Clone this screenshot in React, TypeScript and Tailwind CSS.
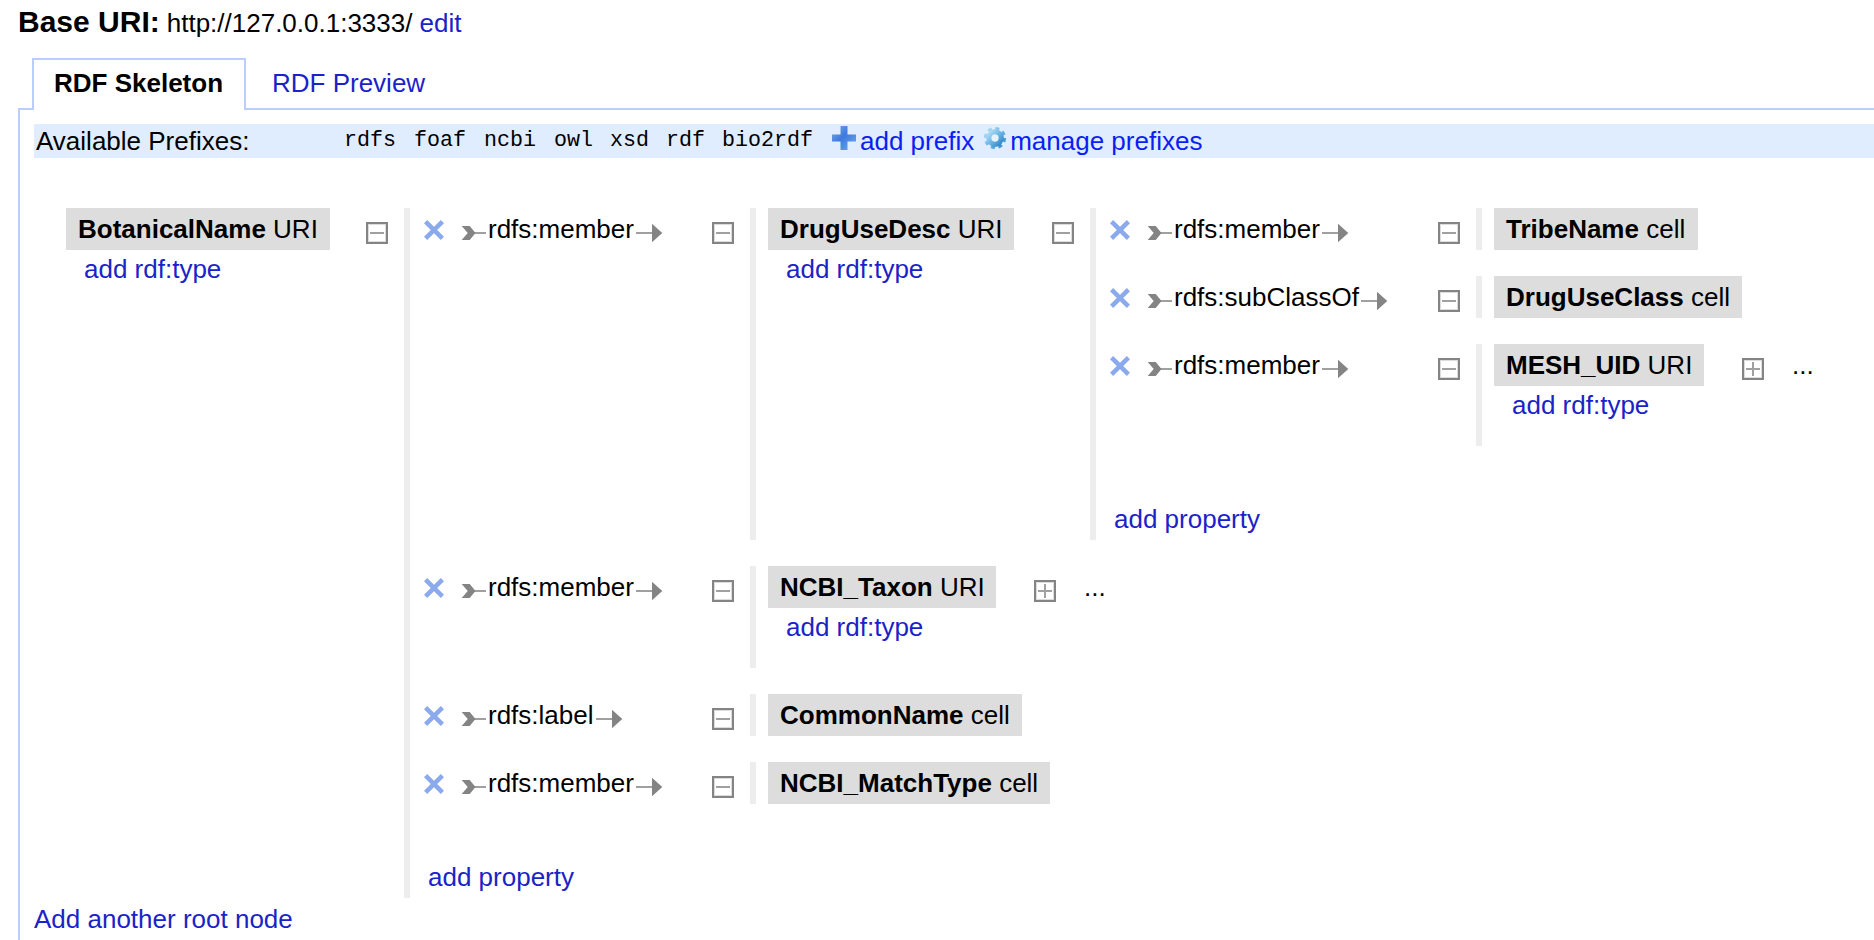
import React from "react";

type Property = { name: string; target: NodeData };
type NodeData = {
  name: string;
  kind: "URI" | "cell";
  boxWidth: string;
  expandGap?: string;
  collapsed?: boolean;
  propertyWidth?: string;
  properties?: Property[];
};

const tree: NodeData = {
  name: "BotanicalName",
  kind: "URI",
  boxWidth: "w-[264px]",
  expandGap: "ml-[36px]",
  propertyWidth: "w-[302px]",
  properties: [
    {
      name: "rdfs:member",
      target: {
        name: "DrugUseDesc",
        kind: "URI",
        boxWidth: "w-[246px]",
        propertyWidth: "w-[342px]",
        properties: [
          { name: "rdfs:member", target: { name: "TribeName", kind: "cell", boxWidth: "w-[204px]" } },
          { name: "rdfs:subClassOf", target: { name: "DrugUseClass", kind: "cell", boxWidth: "w-[248px]" } },
          { name: "rdfs:member", target: { name: "MESH_UID", kind: "URI", boxWidth: "w-[210px]", collapsed: true } },
        ],
      },
    },
    { name: "rdfs:member", target: { name: "NCBI_Taxon", kind: "URI", boxWidth: "w-[228px]", collapsed: true } },
    { name: "rdfs:label", target: { name: "CommonName", kind: "cell", boxWidth: "w-[254px]" } },
    { name: "rdfs:member", target: { name: "NCBI_MatchType", kind: "cell", boxWidth: "w-[282px]" } },
  ],
};

const prefixes = [
  { name: "rdfs", width: "w-[70px]" },
  { name: "foaf", width: "w-[70px]" },
  { name: "ncbi", width: "w-[70px]" },
  { name: "owl", width: "w-[56px]" },
  { name: "xsd", width: "w-[56px]" },
  { name: "rdf", width: "w-[56px]" },
  { name: "bio2rdf", width: "w-[110px]" },
];

function Toggle({ plus = false }: { plus?: boolean }) {
  return (
    <svg className="mt-[14px] block size-[22px] shrink-0" viewBox="0 0 22 22" fill="none">
      <rect x="1" y="1" width="20" height="20" fill="#fff" stroke="#848484" strokeWidth="2" />
      <rect x="2.5" y="2.5" width="17" height="17" stroke="#dcdcdc" />
      <path d="M4 11h14" stroke="#a0a0a0" strokeWidth="2" />
      {plus && <path d="M11 4v14" stroke="#a0a0a0" strokeWidth="2" />}
    </svg>
  );
}

function RemoveIcon() {
  return (
    <svg className="mt-[12px] ml-[14px] block size-[20px] shrink-0" viewBox="0 0 20 20" fill="none">
      <path d="M1.6 1.6 18.4 18.4M18.4 1.6 1.6 18.4" stroke="#8aaaec" strokeWidth="4.5" />
    </svg>
  );
}

function ArrowTail() {
  return (
    <svg className="mt-[16px] ml-[17px] block h-[18px] w-[26px] shrink-0" viewBox="0 0 26 18">
      <path d="M13 9h12" stroke="#a0a0a0" strokeWidth="2" />
      <path d="M.7 2h8l5.800 7-5.800 7H.7l6-7z" fill="#848484" />
    </svg>
  );
}

function ArrowHead() {
  return (
    <svg className="mt-[15px] ml-[2px] block h-[20px] w-[27px] shrink-0" viewBox="0 0 27 20">
      <path d="M0 10h17" stroke="#a0a0a0" strokeWidth="2" />
      <path d="M16 .7 26.300 10 16 19.300z" fill="#848484" />
    </svg>
  );
}

function PlusIcon() {
  return (
    <svg className="mt-[2px] block size-[24px] shrink-0" viewBox="0 0 24 24">
      <defs>
        <linearGradient id="plus-fill" x1="0" y1="0" x2="1" y2="1">
          <stop offset="0" stopColor="#7fabea" />
          <stop offset=".45" stopColor="#3d7add" />
          <stop offset="1" stopColor="#75a8ee" />
        </linearGradient>
      </defs>
      <path d="M8.500 0h7v8.500H24v7h-8.500V24h-7v-8.500H0v-7h8.500z" fill="url(#plus-fill)" />
    </svg>
  );
}

function GearIcon() {
  return (
    <svg className="mt-[2px] ml-[9px] block size-[24px] shrink-0" viewBox="0 0 24 24">
      <defs>
        <linearGradient id="gear-fill" x1="0" y1="0" x2="1" y2="1">
          <stop offset="0" stopColor="#b4dcf5" />
          <stop offset=".5" stopColor="#6cb8e8" />
          <stop offset="1" stopColor="#3488c8" />
        </linearGradient>
      </defs>
      <circle cx="12" cy="12" r="9.400" fill="none" stroke="url(#gear-fill)" strokeWidth="3.400" strokeDasharray="3.900 3.483" />
      <circle cx="12" cy="12" r="6.200" fill="none" stroke="url(#gear-fill)" strokeWidth="5.400" />
      <circle cx="12" cy="12" r="3.400" fill="#e6f3fd" />
    </svg>
  );
}

function PropertyRow({ property, width }: { property: Property; width: string }) {
  return (
    <div className="flex items-start">
      <div className={`flex shrink-0 items-start ${width}`}>
        <RemoveIcon />
        <ArrowTail />
        <span className="mt-[6px] ml-px">{property.name}</span>
        <ArrowHead />
      </div>
      <Toggle />
      <div className="ml-[16px] self-stretch border-l-[6px] border-[#ededed] pl-[12px]">
        <TreeNode node={property.target} />
      </div>
    </div>
  );
}

function TreeNode({ node }: { node: NodeData }) {
  return (
    <div className="flex items-start">
      <div className={`shrink-0 ${node.boxWidth} ${node.kind === "URI" ? "min-h-[102px]" : ""}`}>
        <div className="h-[42px] bg-[#dddddd] px-[12px] py-[6px]">
          <b>{node.name}</b> {node.kind}
        </div>
        {node.kind === "URI" && <a className="mt-[4px] ml-[18px] block text-[#1a23c8]">add rdf:type</a>}
      </div>
      {(node.properties || node.collapsed) && (
        <div className={`flex items-start self-stretch ${node.expandGap ?? "ml-[38px]"}`}>
          <Toggle plus={node.collapsed} />
          {node.collapsed && <span className="mt-[6px] ml-[28px]">...</span>}
          {node.properties && (
            <div className="ml-[16px] flex flex-col gap-[26px] border-l-[6px] border-[#ededed] pb-[6px]">
              {node.properties.map((p, i) => (
                <PropertyRow key={i} property={p} width={node.propertyWidth ?? ""} />
              ))}
              <a className="mt-[32px] ml-[18px] text-[#1a23c8]">add property</a>
            </div>
          )}
        </div>
      )}
    </div>
  );
}

export default function App() {
  return (
    <div className="flex h-[940px] w-[1874px] flex-col overflow-hidden bg-white font-['Liberation_Sans',Arial,sans-serif] text-[26px] leading-[30px] whitespace-nowrap text-black">
      <header className="flex h-[58px] shrink-0 items-baseline gap-[7px] pt-[5px] pl-[18px]">
        <b className="text-[30px] leading-[34px]">Base URI:</b>
        <span>http://127.0.0.1:3333/</span>
        <a className="text-[#1a23c8]">edit</a>
      </header>

      <nav className="z-10 flex h-[52px] shrink-0 pl-[32px]">
        <div className="w-[214px] border-2 border-b-0 border-[#bbccff] bg-white pt-[8px] pl-[20px] font-bold">RDF Skeleton</div>
        <a className="pt-[10px] pl-[26px] text-[#1a23c8]">RDF Preview</a>
      </nav>

      <main className="-mt-[2px] ml-[18px] flex-1 border-t-2 border-l-2 border-[#bbccff] pt-[14px] pl-[14px]">
        <div className="flex h-[34px] bg-[#e0edfe]">
          <span className="w-[310px] pt-[2px] pl-[2px]">Available Prefixes:</span>
          <div className="flex pt-[2px] font-['Liberation_Mono','Courier_New',monospace] text-[21.67px] leading-[30px]">
            {prefixes.map((p) => (
              <span key={p.name} className={p.width}>{p.name}</span>
            ))}
          </div>
          <a className="flex text-[#0a1ef5]">
            <PlusIcon />
            <span className="pt-[2px] pl-[4px]">add prefix</span>
          </a>
          <a className="flex text-[#0a1ef5]">
            <GearIcon />
            <span className="pt-[2px] pl-[3px]">manage prefixes</span>
          </a>
        </div>
        <div className="mt-[50px] ml-[32px]">
          <TreeNode node={tree} />
        </div>
        <a className="mt-[6px] block text-[#1a23c8]">Add another root node</a>
      </main>
    </div>
  );
}
